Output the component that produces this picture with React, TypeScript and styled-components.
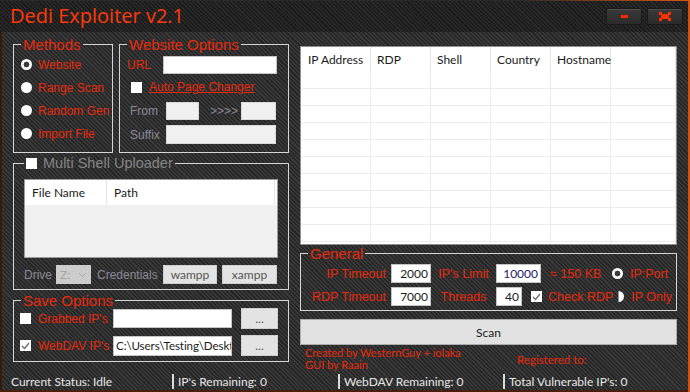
import React from 'react';
import styled, { createGlobalStyle, css } from 'styled-components';

const RED = '#e8290b';
const GREY = '#8a8a96';
const ARIAL = '"Liberation Sans", Arial, sans-serif';
const SEGOE = 'Lato, "Open Sans", sans-serif';

const GlobalStyle = createGlobalStyle`
  html, body { margin: 0; padding: 0; }
  body { background: #2d2d2d; font-family: ${ARIAL}; overflow: hidden; }
  * { box-sizing: border-box; }
`;

const Window = styled.div`
  width: 690px;
  height: 392px;
  display: flex;
  flex-direction: column;
  background: repeating-linear-gradient(45deg, #262626 0px, #262626 1.5px, #3a3a3a 1.5px, #3a3a3a 3px);
  box-shadow: inset -2px 0 0 #d4510f, inset 0 -2px 0 #4a1e0c, inset 2px 0 0 #3a1a0c;
  overflow: hidden;
`;

const TitleBar = styled.div`
  height: 32px;
  flex: none;
  display: flex;
  align-items: flex-start;
  justify-content: space-between;
  padding: 2px 7px 0 10px;
  border-top: 1px solid;
  border-image: linear-gradient(to right, #2a2a2a 75%, #e0560f) 1;
  background: repeating-linear-gradient(45deg, #1b1b1b 0px, #1b1b1b 1.5px, #2a2a2a 1.5px, #2a2a2a 3px);
  box-shadow: inset -2px 0 0 #d4510f;
`;

const Title = styled.div`
  font-family: "Open Sans", sans-serif;
  font-size: 20px;
  line-height: 26px;
  color: #ff3a06;
`;

const WinButtons = styled.div`
  display: flex;
  gap: 5px;
  padding-top: 5px;
`;

const WinButton = styled.div`
  width: 36px;
  height: 17px;
  display: flex;
  align-items: center;
  justify-content: center;
  background: linear-gradient(#3a3a3a, #2b2b2b);
  border: 1px solid #1a1a1a;
  box-shadow: inset 0 1px 0 #4e4e4e;
  border-radius: 2px;
`;

const MinBar = styled.span`
  width: 7px;
  height: 3px;
  background: #ff2a00;
`;

const Main = styled.div`
  flex: 1;
  display: flex;
  gap: 11px;
  padding: 5px 13px 0 13px;
`;

const LeftCol = styled.div`
  width: 276px;
  display: flex;
  flex-direction: column;
`;

const RightCol = styled.div`
  width: 377px;
  display: flex;
  flex-direction: column;
`;

const TopRow = styled.div`
  display: flex;
  gap: 6px;
`;

const Group = styled.fieldset<{ $w?: number; $h: number; $mt?: number }>`
  margin: ${p => p.$mt ?? 0}px 0 0 0;
  padding: 0;
  width: ${p => (p.$w ? `${p.$w}px` : 'auto')};
  height: ${p => p.$h}px;
  min-width: 0;
  border: 1px solid #d6d6d6;
  flex: none;
`;

const Legend = styled.legend<{ $ml?: number }>`
  margin-left: ${p => p.$ml ?? 7}px;
  padding: 0 2px;
  font-size: 15px;
  line-height: 15px;
  color: ${RED};
`;

const LegendInner = styled.span`
  display: inline-flex;
  align-items: center;
  gap: 6px;
  color: #858585;
  font-size: 14.5px;
`;

const RadioList = styled.div`
  display: flex;
  flex-direction: column;
  padding: 1px 0 0 7px;
`;

const RadioRow = styled.div`
  height: 23px;
  display: flex;
  align-items: center;
  gap: 6px;
  color: ${RED};
  font-size: 12px;
  white-space: nowrap;
`;

const Radio = styled.span<{ $on?: boolean }>`
  width: 11px;
  height: 11px;
  border-radius: 50%;
  background: #fff;
  flex: none;
  ${p =>
    p.$on &&
    css`
      background: radial-gradient(circle, #3a3a3a 0 2.6px, #fff 3.2px);
    `}
`;

const Check = styled.span`
  width: 11px;
  height: 11px;
  background: #fff;
  flex: none;
  display: flex;
  align-items: center;
  justify-content: center;
`;

const OptRows = styled.div`
  display: flex;
  flex-direction: column;
  padding: 2px 0 0 7px;
`;

const OptRow = styled.div<{ $h: number; $pl?: number }>`
  height: ${p => p.$h}px;
  display: flex;
  align-items: center;
  padding-left: ${p => p.$pl ?? 0}px;
  font-size: 12px;
  white-space: nowrap;
`;

const FieldLabel = styled.span<{ $w?: number; $grey?: boolean; $ml?: number }>`
  width: ${p => (p.$w ? `${p.$w}px` : 'auto')};
  margin-left: ${p => p.$ml ?? 0}px;
  color: ${p => (p.$grey ? GREY : RED)};
  font-size: 12px;
  flex: none;
`;

const LinkLabel = styled.span`
  margin-left: 7px;
  color: ${RED};
  text-decoration: underline;
`;

const TextBox = styled.div<{ $w: number; $h?: number; $off?: boolean; $right?: boolean; $ml?: number }>`
  width: ${p => p.$w}px;
  height: ${p => p.$h ?? 19}px;
  margin-left: ${p => p.$ml ?? 0}px;
  flex: none;
  background: ${p => (p.$off ? '#f0f0f0' : '#fff')};
  border: 1px solid ${p => (p.$off ? '#dadada' : '#c4c4c4')};
  display: flex;
  align-items: center;
  justify-content: ${p => (p.$right ? 'flex-end' : 'flex-start')};
  padding: 0 2px;
  font-family: ${SEGOE};
  font-size: 12px;
  color: #1a1a1a;
  overflow: hidden;
  white-space: nowrap;
`;

const PathText = styled.span`
  font-size: 11.6px;
  letter-spacing: -0.1px;
`;

const SmallList = styled.div`
  margin: 8px 10px 0 10px;
  height: 79px;
  border: 1px solid #9c9c9c;
  background: #f0f0f0;
`;

const ListHeader = styled.div<{ $h: number }>`
  height: ${p => p.$h}px;
  display: flex;
  background: #fff;
  font-family: ${SEGOE};
  font-size: 12px;
  color: #1a1a1a;
`;

const HeadCell = styled.div<{ $w: number; $pl?: number }>`
  width: ${p => p.$w}px;
  flex: none;
  display: flex;
  align-items: center;
  padding-left: ${p => p.$pl ?? 7}px;
  border-right: 1px solid #e5e5e5;
`;

const DriveRow = styled.div`
  display: flex;
  align-items: center;
  height: 19px;
  margin: 7px 0 0 10px;
  font-size: 12px;
`;

const Combo = styled.div`
  width: 35px;
  height: 19px;
  flex: none;
  background: #cccccc;
  display: flex;
  align-items: center;
  justify-content: space-between;
  padding: 0 4px 0 4px;
  font-family: ${SEGOE};
  font-size: 12px;
  color: #a2a2a2;
`;

const SmallButton = styled.div<{ $w: number; $h?: number; $ml?: number }>`
  width: ${p => p.$w}px;
  height: ${p => p.$h ?? 19}px;
  margin-left: ${p => p.$ml ?? 0}px;
  flex: none;
  background: #e3e3e3;
  border: 1px solid #cfcfcf;
  display: flex;
  align-items: center;
  justify-content: center;
  font-family: ${SEGOE};
  font-size: 12px;
  color: #555;
`;

const SaveRows = styled.div`
  display: flex;
  flex-direction: column;
  gap: 6px;
  padding: 0 0 0 6px;
`;

const SaveRow = styled.div`
  height: 21px;
  display: flex;
  align-items: center;
  font-size: 12px;
`;

const BigList = styled.div`
  margin-top: 9px;
  height: 199px;
  border: 1px solid #8e8e8e;
  background: #fff;
  overflow: hidden;
  flex: none;
`;

const GridRow = styled.div`
  height: 17px;
  display: flex;
  border-bottom: 1px solid #ececec;
`;

const GridCell = styled.div<{ $w: number }>`
  width: ${p => p.$w}px;
  flex: none;
  border-right: 1px solid #ececec;
`;

const GenRows = styled.div`
  display: flex;
  flex-direction: column;
  padding-top: 1px;
`;

const GenRow = styled.div`
  height: 23px;
  display: flex;
  align-items: center;
  font-size: 12.5px;
  color: ${RED};
  white-space: nowrap;
`;

const GenLabel = styled.span<{ $w: number; $align: 'right' | 'center' }>`
  width: ${p => p.$w}px;
  flex: none;
  text-align: ${p => p.$align};
  padding-right: ${p => (p.$align === 'right' ? 5 : 0)}px;
`;

const GenNote = styled.span<{ $ml: number }>`
  margin-left: ${p => p.$ml}px;
  flex: none;
`;

const OptionPick = styled.div`
  margin-left: auto;
  width: 64px;
  display: flex;
  align-items: center;
  gap: 7px;
`;

const ScanButton = styled.div`
  margin-top: 8px;
  height: 26px;
  flex: none;
  background: #e1e1e1;
  border: 1px solid #adadad;
  display: flex;
  align-items: center;
  justify-content: center;
  font-family: ${SEGOE};
  font-size: 12px;
  color: #1a1a1a;
`;

const Credits = styled.div`
  display: flex;
  padding-left: 5px;
  margin-top: 2px;
  font-family: ${SEGOE};
  font-size: 11px;
  color: ${RED};
`;

const CreditLines = styled.div`
  width: 212px;
  line-height: 12px;
  white-space: nowrap;
`;

const Registered = styled.div`
  margin-top: 7px;
  font-size: 11.5px;
  line-height: 12px;
`;

const StatusBar = styled.div`
  height: 24px;
  flex: none;
  display: flex;
  align-items: center;
  padding: 0 0 3px 11px;
  font-family: ${SEGOE};
  font-size: 12px;
  color: #e6e6e6;
`;

const StatusCell = styled.div<{ $w?: number; $sep?: boolean }>`
  width: ${p => (p.$w ? `${p.$w}px` : 'auto')};
  flex: none;
  line-height: 15px;
  ${p =>
    p.$sep &&
    css`
      border-left: 2px solid #dcdcdc;
      padding-left: 4px;
    `}
`;

const CheckMark = () => (
  <svg width="9" height="8" viewBox="0 0 9 8">
    <polyline points="1,4 3.5,6.5 8,1" fill="none" stroke="#6e6e6e" strokeWidth="1.4" />
  </svg>
);

const CloseGlyph = () => (
  <svg width="12" height="9" viewBox="0 0 12 9">
    <g fill="#ff3000">
      <rect x="0" y="0" width="3" height="3" />
      <rect x="9" y="0" width="3" height="3" />
      <rect x="2" y="2" width="8" height="5" />
      <rect x="0" y="6" width="3" height="3" />
      <rect x="9" y="6" width="3" height="3" />
    </g>
  </svg>
);

const Chevron = () => (
  <svg width="9" height="6" viewBox="0 0 9 6">
    <polyline points="1,1 4.5,4.5 8,1" fill="none" stroke="#a8a8a8" strokeWidth="1" />
  </svg>
);

const HalfRadio = () => (
  <svg width="11" height="11" viewBox="0 0 11 11" style={{ flex: 'none' }}>
    <path d="M5.5 0 A5.5 5.5 0 0 1 5.5 11 Z" fill="#fff" />
  </svg>
);

const columns = [70, 60, 60, 60, 60, 65];
const headers = ['IP Address', 'RDP', 'Shell', 'Country', 'Hostname', ''];

const App = () => {
  return (
    <>
      <GlobalStyle />
      <Window>
        <TitleBar>
          <Title>Dedi Exploiter v2.1</Title>
          <WinButtons>
            <WinButton><MinBar /></WinButton>
            <WinButton><CloseGlyph /></WinButton>
          </WinButtons>
        </TitleBar>

        <Main>
          <LeftCol>
            <TopRow>
              <Group $w={100} $h={116}>
                <Legend>Methods</Legend>
                <RadioList>
                  <RadioRow><Radio $on />Website</RadioRow>
                  <RadioRow><Radio />Range Scan</RadioRow>
                  <RadioRow><Radio />Random Gen</RadioRow>
                  <RadioRow><Radio />Import File</RadioRow>
                </RadioList>
              </Group>
              <Group $w={170} $h={116}>
                <Legend>Website Options</Legend>
                <OptRows>
                  <OptRow $h={21}>
                    <FieldLabel $w={36}>URL</FieldLabel>
                    <TextBox $w={114} $h={18} />
                  </OptRow>
                  <OptRow $h={24} $pl={4}>
                    <Check />
                    <LinkLabel>Auto Page Changer</LinkLabel>
                  </OptRow>
                  <OptRow $h={23} $pl={3}>
                    <FieldLabel $w={36} $grey>From</FieldLabel>
                    <TextBox $w={33} $h={18} $off />
                    <FieldLabel $w={31} $ml={11} $grey>&gt;&gt;&gt;&gt;</FieldLabel>
                    <TextBox $w={35} $h={18} $off />
                  </OptRow>
                  <OptRow $h={25} $pl={3}>
                    <FieldLabel $w={36} $grey>Suffix</FieldLabel>
                    <TextBox $w={110} $h={19} $off />
                  </OptRow>
                </OptRows>
              </Group>
            </TopRow>

            <Group $h={134} $mt={3}>
              <Legend $ml={10}>
                <LegendInner><Check />Multi Shell Uploader</LegendInner>
              </Legend>
              <SmallList>
                <ListHeader $h={25}>
                  <HeadCell $w={82}>File Name</HeadCell>
                  <HeadCell $w={168}>Path</HeadCell>
                </ListHeader>
              </SmallList>
              <DriveRow>
                <FieldLabel $w={32} $grey>Drive</FieldLabel>
                <Combo>Z:<Chevron /></Combo>
                <FieldLabel $w={66} $ml={6} $grey>Credentials</FieldLabel>
                <SmallButton $w={54}>wampp</SmallButton>
                <SmallButton $w={55} $ml={5}>xampp</SmallButton>
              </DriveRow>
            </Group>

            <Group $h={69} $mt={3}>
              <Legend>Save Options</Legend>
              <SaveRows>
                <SaveRow>
                  <Check />
                  <FieldLabel $w={75} $ml={7}>Grabbed IP's</FieldLabel>
                  <TextBox $w={119} />
                  <SmallButton $w={37} $h={21} $ml={9}>...</SmallButton>
                </SaveRow>
                <SaveRow>
                  <Check><CheckMark /></Check>
                  <FieldLabel $w={75} $ml={7}>WebDAV IP's</FieldLabel>
                  <TextBox $w={119} $h={20}><PathText>C:\Users\Testing\Deskt</PathText></TextBox>
                  <SmallButton $w={37} $h={21} $ml={9}>...</SmallButton>
                </SaveRow>
              </SaveRows>
            </Group>
          </LeftCol>

          <RightCol>
            <BigList>
              <ListHeader $h={25}>
                {headers.map((h, i) => (
                  <HeadCell key={i} $w={columns[i]} $pl={i === 0 ? 7 : 6}>{h}</HeadCell>
                ))}
              </ListHeader>
              {Array.from({ length: 11 }).map((_, r) => (
                <GridRow key={r}>
                  {columns.map((w, i) => <GridCell key={i} $w={w} />)}
                </GridRow>
              ))}
            </BigList>

            <Group $h={65} $mt={1}>
              <Legend>General</Legend>
              <GenRows>
                <GenRow>
                  <GenLabel $w={90} $align="right">IP Timeout</GenLabel>
                  <TextBox $w={40} $right>2000</TextBox>
                  <GenLabel $w={65} $align="center">IP's Limit</GenLabel>
                  <TextBox $w={45} $right style={{ color: '#241a66' }}>10000</TextBox>
                  <GenNote $ml={9}>≈ 150 KB</GenNote>
                  <OptionPick><Radio $on />IP:Port</OptionPick>
                </GenRow>
                <GenRow>
                  <GenLabel $w={90} $align="right">RDP Timeout</GenLabel>
                  <TextBox $w={40} $right>7000</TextBox>
                  <GenLabel $w={65} $align="center">Threads</GenLabel>
                  <TextBox $w={26} $right>40</TextBox>
                  <Check style={{ marginLeft: 9 }}><CheckMark /></Check>
                  <GenNote $ml={6}>Check RDP</GenNote>
                  <OptionPick><HalfRadio />IP Only</OptionPick>
                </GenRow>
              </GenRows>
            </Group>

            <ScanButton>Scan</ScanButton>

            <Credits>
              <CreditLines>
                Created by WesternGuy + iolaka
                <br />
                GUI by Raain
              </CreditLines>
              <Registered>Registered to:</Registered>
            </Credits>
          </RightCol>
        </Main>

        <StatusBar>
          <StatusCell $w={161}>Current Status: Idle</StatusCell>
          <StatusCell $w={166} $sep>IP's Remaining: 0</StatusCell>
          <StatusCell $w={165} $sep>WebDAV Remaining: 0</StatusCell>
          <StatusCell $sep>Total Vulnerable IP's: 0</StatusCell>
        </StatusBar>
      </Window>
    </>
  );
};

export default App;
